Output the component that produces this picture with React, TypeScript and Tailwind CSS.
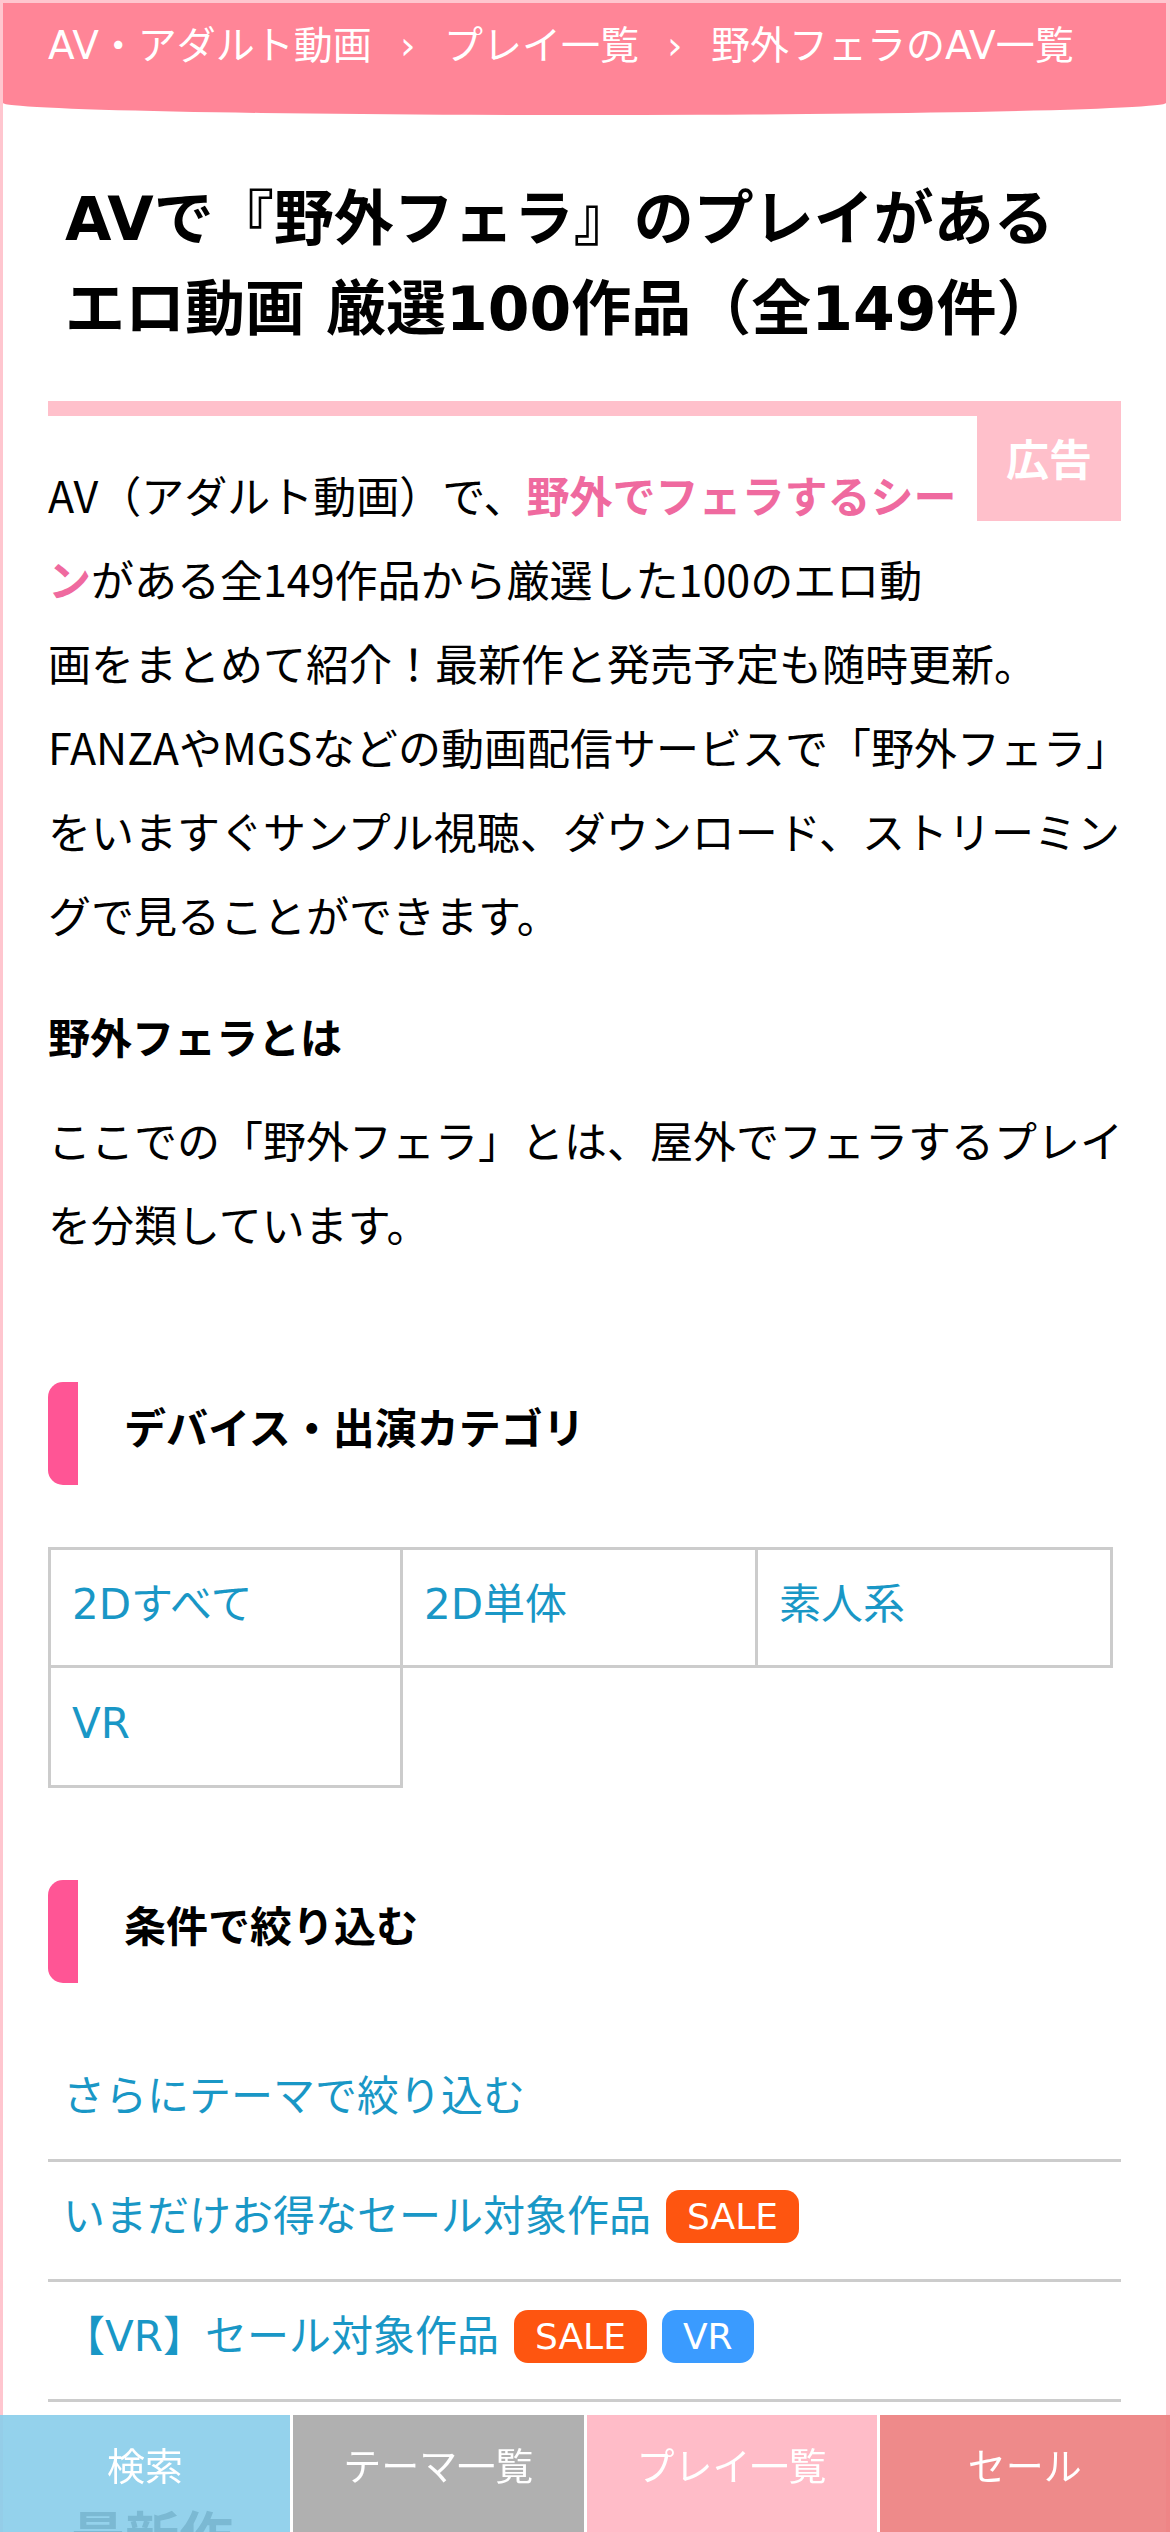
import { Fragment } from "react";

const crumbs = ["AV・アダルト動画", "プレイ一覧", "野外フェラのAV一覧"];
const devices = ["2Dすべて", "2D単体", "素人系", "VR"];

function Badge({ label, color }: { label: string; color: string }) {
  return (
    <span
      className={`ml-[15px] inline-flex h-[53px] items-center rounded-[14px] px-[21px] text-[36px] leading-none text-white ${color}`}
    >
      {label}
    </span>
  );
}

function SectionHeading({ children }: { children: React.ReactNode }) {
  return (
    <h2 className="flex h-[103px] items-center rounded-[15px] border-l-[30px] border-[#ff5595] pb-[8px] pl-[46px] text-[42px] font-bold">
      {children}
    </h2>
  );
}

export default function App() {
  return (
    <div className="min-h-screen border-l-[3px] border-r-[4px] border-t-[3px] border-[#ffc6cf] bg-white font-['DejaVu_Sans','Noto_Sans_CJK_JP',sans-serif] text-black">
      <nav className="flex h-[112px] whitespace-nowrap rounded-b-[50%_12px] bg-[#ff8597] pl-[45px] pt-[14px] text-[39px] leading-[58px] text-white">
        {crumbs.map((c, i) => (
          <Fragment key={c}>
            {i > 0 && <span className="w-[72px] text-center">›</span>}
            <span>{c}</span>
          </Fragment>
        ))}
      </nav>

      <main className="px-[45px] pb-[120px]">
        <h1 className="mt-[59px] pl-[17px] text-[60px] font-bold leading-[90px]">
          AVで『野外フェラ』のプレイがある
          <br />
          エロ動画 厳選100作品（全149件）
        </h1>

        <div className="mt-[47px] border-t-[15px] border-[#ffc0cb]">
          <div className="float-right -mt-[15px] mb-[24px] ml-[16px] flex h-[120px] w-[144px] items-center justify-center bg-[#ffc0cb] text-[43px] font-bold text-white">
            広告
          </div>
          <p className="whitespace-nowrap pt-[36px] font-['Noto_Sans_CJK_JP',sans-serif] text-[43px] leading-[84px]">
            AV（アダルト動画）で、
            <span className="font-bold text-[#ef6a9f]">
              野外でフェラするシー
              <br />ン
            </span>
            がある全149作品から厳選した100のエロ動
            <br />
            画をまとめて紹介！最新作と発売予定も随時更新。
            <br />
            FANZAやMGSなどの動画配信サービスで「野外フェラ」
            <br />
            をいますぐサンプル視聴、ダウンロード、ストリーミン
            <br />
            グで見ることができます。
          </p>
        </div>

        <h3 className="mt-[42px] text-[42px] font-bold leading-[84px]">野外フェラとは</h3>
        <p className="mt-[19px] whitespace-nowrap text-[43px] leading-[84px]">
          ここでの「野外フェラ」とは、屋外でフェラするプレイ
          <br />
          を分類しています。
        </p>

        <section className="mt-[113px]">
          <SectionHeading>デバイス・出演カテゴリ</SectionHeading>
          <div className="mt-[62px] grid w-[1065px] grid-cols-3">
            {devices.map((d, i) => (
              <a
                key={d}
                className={`flex items-center border-b-[3px] border-r-[3px] border-[#cccccc] pb-[6px] pl-[21px] text-[42px] text-[#1997c6] ${i < 3 ? "h-[121px] border-t-[3px]" : "h-[120px]"} ${i % 3 === 0 ? "border-l-[3px]" : ""}`}
              >
                {d}
              </a>
            ))}
          </div>
        </section>

        <section className="mt-[92px]">
          <SectionHeading>条件で絞り込む</SectionHeading>
          <ul className="mt-[59px] text-[42px] text-[#1997c6]">
            <li className="flex h-[120px] items-center border-b-[3px] border-[#cccccc] pb-[8px] pl-[15px]">
              さらにテーマで絞り込む
            </li>
            <li className="flex h-[120px] items-center border-b-[3px] border-[#cccccc] pb-[8px] pl-[15px]">
              いまだけお得なセール対象作品
              <Badge label="SALE" color="bg-[#fe5510]" />
            </li>
            <li className="flex h-[120px] items-center border-b-[3px] border-[#cccccc] pb-[8px] pl-[15px]">
              【VR】セール対象作品
              <Badge label="SALE" color="bg-[#fe5510]" />
              <Badge label="VR" color="bg-[#3a9bff]" />
            </li>
          </ul>
        </section>

        <h2 className="mt-[96px] pl-[23px] text-[54px] font-bold leading-[81px]">最新作</h2>
      </main>

      <footer className="fixed bottom-0 left-0 right-0 flex h-[117px] gap-[3px] text-[38px] leading-[58px] text-white">
        <a className="flex-1 bg-[#88cdea]/90 pt-[23px] text-center">検索</a>
        <a className="flex-1 bg-[#a7a7a7]/90 pt-[23px] text-center">テーマ一覧</a>
        <a className="flex-1 bg-[#ffb5c2]/90 pt-[23px] text-center">プレイ一覧</a>
        <a className="flex-1 bg-[#ec7d7d]/90 pt-[23px] text-center">セール</a>
      </footer>
    </div>
  );
}
